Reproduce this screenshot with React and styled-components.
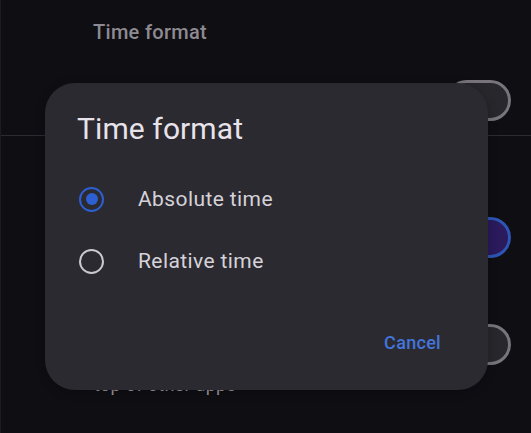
import React from 'react';
import styled, { createGlobalStyle } from 'styled-components';

const GlobalStyle = createGlobalStyle`
    html, body {
        margin: 0;
        padding: 0;
        background-color: #0f0e13;
    }
    body {
        font-family: Roboto, "Noto Sans", "Liberation Sans", sans-serif;
    }
`

const Screen = styled.div`
    position: relative;
    width: 531px;
    height: 433px;
    overflow: hidden;
    background-color: #0f0e13;
    border-left: 1px solid #1d1c22;
    box-sizing: border-box;
`

const SettingsList = styled.div`
    display: flex;
    flex-direction: column;
`

const SectionTitle = styled.div`
    padding: 20px 0 0 92px;
    height: 44px;
    font-size: 20px;
    font-weight: 500;
    color: #8d8b91;
    letter-spacing: 0.3px;
`

const Row = styled.div`
    display: flex;
    align-items: flex-start;
    justify-content: space-between;
    height: ${props => props.height}px;
    padding: ${props => props.top}px 20px 0 93px;
    border-bottom: ${props => props.divider ? '1px solid #2c2b31' : 'none'};
    box-sizing: border-box;
`

const RowText = styled.div`
    padding-top: ${props => props.top || 0}px;
    font-size: 18px;
    line-height: 21px;
    color: #9a979e;
    letter-spacing: 0.3px;
`

const Track = styled.div`
    width: 65px;
    height: 41px;
    border-radius: 21px;
    box-sizing: border-box;
    border: 3px solid ${props => props.on ? '#2c55b4' : '#77757b'};
    background-color: ${props => props.on ? '#2b1a5c' : '#28272c'};
`

const Dialog = styled.div`
    position: absolute;
    left: 44px;
    top: 83px;
    width: 443px;
    height: 307px;
    border-radius: 30px;
    background-color: #2b2a30;
    box-shadow: 0 2px 10px rgba(0, 0, 0, 0.25);
    display: flex;
    flex-direction: column;
    padding: 28px 0 0 32px;
    box-sizing: border-box;
`

const DialogTitle = styled.h2`
    margin: 0 0 32px;
    font-size: 30px;
    font-weight: 400;
    color: #e8e3ea;
    line-height: 36px;
    letter-spacing: 0.1px;
`

const Options = styled.div`
    display: flex;
    flex-direction: column;
    gap: 22px;
`

const Option = styled.label`
    display: flex;
    align-items: center;
    gap: 34px;
    height: 40px;
    padding-left: 2px;
    font-size: 21px;
    color: #d6d2d9;
    letter-spacing: 0.4px;
`

const Radio = styled.span`
    width: 25px;
    height: 25px;
    box-sizing: border-box;
    border-radius: 50%;
    border: 2.5px solid ${props => props.checked ? '#2d5fd2' : '#cbc8ce'};
    display: flex;
    align-items: center;
    justify-content: center;

    &::after {
        content: '';
        width: 12px;
        height: 12px;
        border-radius: 50%;
        background-color: #2d5fd2;
        display: ${props => props.checked ? 'block' : 'none'};
    }
`

const Actions = styled.div`
    display: flex;
    justify-content: flex-end;
    margin-top: auto;
    padding: 0 47px 37px 0;
`

const TextButton = styled.button`
    background: none;
    border: none;
    padding: 0;
    font-family: inherit;
    font-size: 18px;
    font-weight: 500;
    color: #4375dc;
    letter-spacing: 0.3px;
`

export default class App extends React.Component {
    state = {
        selected: 'absolute'
    }

    render() {
        const options = [
            { id: 'absolute', label: 'Absolute time' },
            { id: 'relative', label: 'Relative time' }
        ]

        return (
            <Screen>
                <GlobalStyle />
                <SettingsList>
                    <SectionTitle>Time format</SectionTitle>
                    <Row height={72} top={16} divider>
                        <RowText />
                        <Track />
                    </Row>
                    <Row height={160} top={81}>
                        <RowText />
                        <Track on />
                    </Row>
                    <Row height={137} top={28}>
                        <RowText top={50}>top of other apps</RowText>
                        <Track />
                    </Row>
                </SettingsList>

                <Dialog>
                    <DialogTitle>Time format</DialogTitle>
                    <Options>
                        {options.map((option) => (
                            <Option key={option.id} onClick={() => this.setState({ selected: option.id })}>
                                <Radio checked={this.state.selected === option.id} />
                                {option.label}
                            </Option>
                        ))}
                    </Options>
                    <Actions>
                        <TextButton>Cancel</TextButton>
                    </Actions>
                </Dialog>
            </Screen>
        )
    }
}
